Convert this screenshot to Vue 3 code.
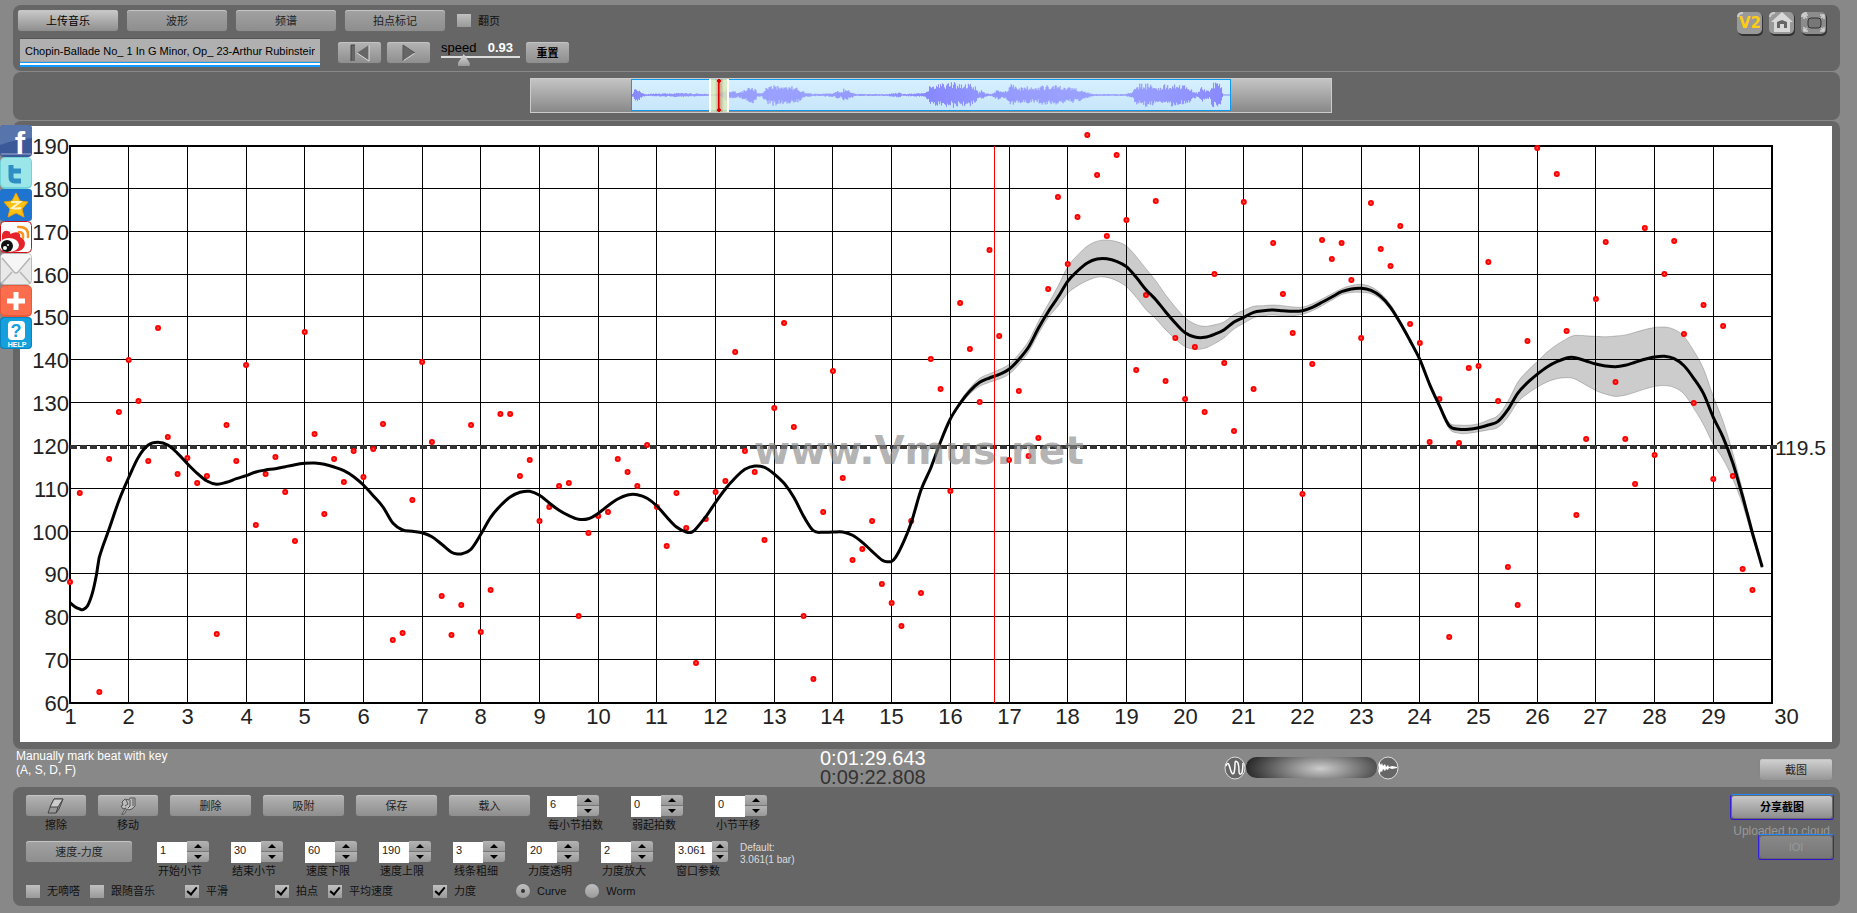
<script setup>
import { ref } from 'vue'

const tabs = ['上传音乐', '波形', '频谱', '拍点标记']
const title = ref('Chopin-Ballade No_ 1 In G Minor, Op_ 23-Arthur Rubinstein')
const speed = ref(25)
const volume = ref(50)

const editButtons = ['删除', '吸附', '保存', '载入']
const beatFields = ref([
  { id: 'beats', label: '每小节拍数', value: '6' },
  { id: 'pickup', label: '弱起拍数', value: '0' },
  { id: 'shift', label: '小节平移', value: '0' },
])
const viewFields = ref([
  { id: 'start', label: '开始小节', value: '1' },
  { id: 'end', label: '结束小节', value: '30' },
  { id: 'tempo-min', label: '速度下限', value: '60' },
  { id: 'tempo-max', label: '速度上限', value: '190' },
  { id: 'line-width', label: '线条粗细', value: '3' },
  { id: 'opacity', label: '力度透明', value: '20' },
  { id: 'zoom', label: '力度放大', value: '2' },
  { id: 'window', label: '窗口参数', value: '3.061', wide: true },
])
const checkGroups = ref([
  [{ label: '无嘀嗒', on: false }, { label: '跟随音乐', on: false }],
  [{ label: '平滑', on: true }],
  [{ label: '拍点', on: true }, { label: '平均速度', on: true }],
  [{ label: '力度', on: true }],
])
const shape = ref('Curve')

/* Chart geometry: one beat is a sixth of a bar */
const left = 70
const right = 1772
const top = 145.7
const bottom = 702.7
const bar = (right - left) / 29
const beat = bar / 6
const bars = Array.from({ length: 30 }, (_, i) => ({ n: i + 1, x: Math.floor(left + i * bar) + 0.5 }))
const levels = Array.from({ length: 14 }, (_, i) => ({
  n: 190 - i * 10,
  y: Math.floor(top + (i * (bottom - top)) / 13 - 0.2) + 0.5,
}))

const beatHeights = [
  582, 493, null, 692, 459, 412, 360, 401, 461, 328, 437, 474,
  458, 483, 476, 634, 425, 461, 365, 525, 474, 457, 492, 541,
  332, 434, 514, 459, 482, 451, 477, 449, 424, 640, 633, 500,
  362, 442, 596, 635, 605, 425, 632, 590, 414, 414, 476, 460,
  521, 507, 486, 483, 616, 533, 516, 512, 459, 472, 486, 445,
  507, 546, 493, 528, 663, 519, 492, 481, 352, 451, 472, 540,
  408, 323, 427, 616, 679, 512, 371, 478, 560, 549, 521, 584,
  603, 626, 521, 593, 359, 389, 491, 303, 349, 402, 250, 336,
  460, 391, 456, 438, 289, 197, 264, 217, 135, 175, 236, 155,
  220, 370, 295, 201, 381, 338, 399, 347, 412, 274, 363, 431,
  202, 389, null, 243, 294, 333, 494, 364, 240, 259, 243, 280,
  338, 203, 249, 266, 226, 324, 343, 442, 399, 637, 443, 368,
  366, 262, 401, 567, 605, 341, 148, null, 174, 331, 515, 439,
  299, 242, 382, 439, 484, 228, 455, 274, 241, 334, 403, 305,
  479, 326, 476, 569, 590,
]
const dots = beatHeights.map((y, k) => ({ x: left + k * beat, y })).filter((d) => d.y !== null)

/* Smoothed tempo: pairs of [beat, height] */
const curve = [
  [0, 602.7], [0.5, 606.7], [1, 609], [1.3, 609.7], [1.8, 605.7], [2.3, 592.7], [2.7, 575], [3, 557.3],
  ...[529, 500.7, 477.7, 457, 445, 442.3, 445, 453.3, 463.7, 473.3, 481, 484.3, 482.3, 478.7, 475.7, 472, 470,
    468.7, 466.7, 464.7, 463.3, 463, 464.3, 467, 470.7, 476.7, 485, 495.7, 507, 523, 530, 531.3, 532.7, 536.7,
    544.3, 552.3].map((y, i) => [i + 4, y]),
  [39.6, 554], [40.2, 553.3],
  ...[549.3, 534.3, 517.3, 505.7, 497, 492.3, 491.3, 495.3, 503, 510.3, 515.7, 519.3, 518.7, 513.3, 505.7, 499,
    495, 494.7, 498.3, 506, 517, 527, 532].map((y, i) => [i + 41, y]),
  [63.6, 532],
  ...[528.7, 516.7, 502.3, 489, 478, 469.3, 466, 467.3, 474, 483.3, 497.3, 516.3, 530.7, 532.3, 532, 532, 535.3,
    542.3, 551.3, 560].map((y, i) => [i + 64, y]),
  [83.5, 561.7], [84, 561.3], [84.4, 557.3],
  ...[546.7, 522.7, 490, 468, 441.7, 419, 403.3, 391, 382.3, 378, 374.3, 369.3, 359.5, 347, 328.3, 311.7, 297.3,
    281.3, 271, 263, 259, 258.7, 261.3, 266.7, 277.3, 289.7, 299.7, 311.7, 323, 332.7, 337, 337.3, 334.3, 329.7,
    322, 317.3, 312.3, 310.7, 310, 310.7, 311.3, 310.7, 307.3, 302.3, 297, 291.7, 289, 288.3, 290.3, 296.3, 307.3,
    323, 340.7, 359.7, 384.3, 405.7, 425.7, 429.3, 429.3, 427.7, 425, 421.3, 409.7, 393.3, 382.7, 374.3, 367,
    361.7, 358].map((y, i) => [i + 85, y]),
  [153.5, 357.3],
  ...[358, 361, 364, 366, 366.7, 365.3, 362.3, 359.3, 357, 356.3, 358.7, 365.7, 378.3, 393.7, 417.3, 437.3, 463.3,
    496.7, 533, 567].map((y, i) => [i + 154, y]),
]

/* Half height of the loudness band: [beat, above, below] */
const band = [
  [90, 0, 0], [91, 2, 2], [93, 4, 4], [96, 5, 5], [98, 6, 5], [100, 7.7, 6], [102, 14.6, 12], [104, 17, 17.7],
  [106, 18.7, 18.7], [108, 20.7, 20], [110, 21, 20], [112, 17, 18], [114, 15, 14], [115, 13, 12.3], [116, 11, 11],
  [118, 8, 8], [120, 7, 6], [122, 5, 5], [124, 5, 5], [126, 3.7, 3.7], [130, 3, 3], [132, 4, 4], [134, 3, 3],
  [137, 2, 2], [140, 2, 2], [142, 4.3, 4], [144, 4, 4], [146, 6, 6], [148, 11, 9], [150, 12.7, 13], [152, 17, 17],
  [153, 19.3, 19.7], [154, 22.7, 21.7], [156, 27.7, 26.7], [158, 30.7, 29.7], [160, 30, 30], [163, 29.3, 29.3],
  [165, 29.3, 28.3], [166, 27.5, 30], [167, 25, 31], [168, 21, 27], [169, 16, 22], [170, 10, 16], [171, 6, 8],
  [173, 1, 1],
]

function spread(k, side) {
  const i = Math.max(1, band.findIndex((b) => b[0] >= k))
  const a = band[i - 1]
  const b = band[i]
  return a[side] + ((b[side] - a[side]) * (k - a[0])) / (b[0] - a[0])
}

function smooth(points) {
  const at = (i) => points[Math.min(points.length - 1, Math.max(0, i))]
  const f = (n) => n.toFixed(1)
  return points.slice(1).map((p, i) => {
    const [p0, p1, p2, p3] = [at(i - 1), at(i), p, at(i + 2)]
    const d = (p2[0] - p1[0]) / 3
    const s1 = (p2[1] - p0[1]) / (p2[0] - p0[0])
    const s2 = p3 === p2 ? (p2[1] - p1[1]) / (p2[0] - p1[0]) : (p3[1] - p1[1]) / (p3[0] - p1[0])
    return `C${f(p1[0] + d)} ${f(p1[1] + s1 * d)} ${f(p2[0] - d)} ${f(p2[1] - s2 * d)} ${f(p2[0])} ${f(p2[1])}`
  }).join('')
}

const line = curve.map(([k, y]) => [left + k * beat, y])
const linePath = `M${line[0][0]} ${line[0][1]}${smooth(line)}`
const loud = curve.filter(([k]) => k >= 90)
const upper = loud.map(([k, y]) => [left + k * beat, y - spread(k, 1)])
const lower = loud.map(([k, y]) => [left + k * beat, y + spread(k, 2)]).reverse()
const bandPath = `M${upper[0]}${smooth(upper)}L${lower[0]}${smooth(lower)}Z`

/* Waveform envelope: [position, half height], drawn as one column per pixel */
const envelope = [
  [0, 2], [3, 7], [6, 6], [10, 2], [14, 1], [46, 2], [80, 1], [88, 1.5], [92, 4], [95, 7], [98, 3], [102, 4],
  [106, 2], [112, 5], [121, 8], [126, 2], [130, 2], [135, 8], [141, 11], [148, 8], [156, 9], [166, 7], [174, 2],
  [187, 1], [203, 2], [205, 5], [209, 2], [212, 6], [218, 4], [224, 1], [255, 1], [268, 2.5], [271, 1], [294, 2],
  [298, 8], [308, 11], [323, 12], [339, 11], [344, 8], [347, 3], [350, 5], [354, 2], [360, 1], [366, 5], [373, 3],
  [380, 11], [386, 8], [396, 8], [404, 7], [412, 9], [422, 9], [433, 8], [446, 7], [451, 5], [459, 2], [464, 1],
  [495, 1], [502, 3], [506, 11], [517, 11], [527, 8], [537, 11], [548, 10], [558, 8], [563, 4], [567, 2], [571, 8],
  [575, 6], [579, 3], [582, 12], [590, 12], [592, 3], [593, 0.5], [600, 0.5],
]
let seed = 11
const noise = () => (seed = (seed * 16807) % 2147483647) / 2147483647
const wavePath = Array.from({ length: 600 }, (_, x) => {
  const i = Math.max(1, envelope.findIndex((e) => e[0] >= x))
  const [a, b] = [envelope[i - 1], envelope[i]]
  const h = a[1] + ((b[1] - a[1]) * (x - a[0])) / (b[0] - a[0])
  const up = Math.max(0.5, h * (0.5 + 0.6 * noise()))
  const down = Math.max(0.5, h * (0.5 + 0.6 * noise()))
  return `M${x + 0.5} ${(15 - up).toFixed(1)}V${(15 + down).toFixed(1)}`
}).join('')
</script>

<template>
  <div class="page">
    <header class="panel toolbar">
      <div class="tools">
        <div class="tabs">
          <button v-for="(t, i) in tabs" :key="t" type="button" class="btn tab" :class="{ lit: i === 0 }">{{ t }}</button>
          <label class="check flip"><input type="checkbox" />翻页</label>
        </div>
        <div class="player">
          <input v-model="title" class="title" type="text" aria-label="Title" />
          <button type="button" class="btn media" aria-label="Rewind">
            <svg width="24" height="18" viewBox="0 0 24 18">
              <path d="M3 1h4v16H3z" fill="#666" /><path d="M3 17V1h4" fill="none" stroke="#444" />
              <path d="M21 1L9 9l12 8z" fill="#666" /><path d="M21 1v16L9 9" fill="none" stroke="#ddd" />
            </svg>
          </button>
          <button type="button" class="btn media" aria-label="Play">
            <svg width="24" height="18" viewBox="0 0 24 18">
              <path d="M6 1l12 8-12 8z" fill="#666" /><path d="M6 17l12-8" fill="none" stroke="#ddd" />
              <path d="M6 17V1l12 8" fill="none" stroke="#555" />
            </svg>
          </button>
          <div class="speed">
            <div class="speed-text"><label for="speed">speed</label><output for="speed">0.93</output></div>
            <input id="speed" v-model="speed" type="range" min="0" max="100" />
          </div>
          <button type="button" class="btn reset">重置</button>
        </div>
      </div>
      <nav class="shortcuts">
        <a href="#" aria-label="Version 2">
          <svg width="28" height="26" viewBox="0 0 28 26">
            <rect x="2" y="2" width="25" height="23" rx="5" fill="#333" /><rect x="1" y="1" width="25" height="22" rx="5" fill="#999" />
            <path d="M2 6q0-4 5-4" fill="none" stroke="#ccc" stroke-width="2" />
            <text x="14" y="17" class="v2">V2</text>
          </svg>
        </a>
        <a href="#" aria-label="Home">
          <svg width="28" height="26" viewBox="0 0 28 26">
            <rect x="2" y="2" width="25" height="23" rx="5" fill="#333" /><rect x="1" y="1" width="25" height="22" rx="5" fill="#999" />
            <path d="M2 6q0-4 5-4" fill="none" stroke="#ccc" stroke-width="2" />
            <path d="M14 1L3 11h3v10h16V11h3z" fill="#d8d8d8" />
            <path d="M9 11l5-2 5 2v6h-3v-4h-4v4H9z" fill="#666" />
          </svg>
        </a>
        <a href="#" aria-label="Full screen">
          <svg width="28" height="26" viewBox="0 0 28 26">
            <rect x="2" y="2" width="25" height="23" rx="5" fill="#333" /><rect x="1" y="1" width="25" height="22" rx="5" fill="#8c8c8c" />
            <path d="M2 6q0-4 5-4" fill="none" stroke="#ccc" stroke-width="2" />
            <rect x="8" y="7" width="13" height="10" rx="3" fill="#777" stroke="#333" />
            <path d="M4 8V4h4M4 4l3 3M20 4h4v4M24 4l-3 3M4 16v4h4M4 20l3-3M20 20h4v-4M24 20l-3-3" fill="none" stroke="#d0d0d0" stroke-width="1.5" />
          </svg>
        </a>
      </nav>
    </header>

    <section class="panel overview">
      <div class="track">
        <div class="clip">
          <svg class="wave" viewBox="0 0 600 30" preserveAspectRatio="none">
            <path :d="wavePath" stroke="#8888ff" fill="none" />
          </svg>
          <div class="window"><i></i></div>
        </div>
      </div>
    </section>

    <main class="panel stage">
      <svg class="chart" viewBox="20 126 1812 616" role="img" aria-label="Tempo by bar">
        <g class="grid">
          <line v-for="b in bars.slice(1, 29)" :key="'x' + b.n" :x1="b.x" :x2="b.x" :y1="top" :y2="bottom" />
          <line v-for="l in levels.slice(1, 13)" :key="'y' + l.n" :x1="left" :x2="right" :y1="l.y" :y2="l.y" />
        </g>
        <g class="ylabels"><text v-for="l in levels" :key="l.n" x="69" :y="l.y + 8">{{ l.n }}</text></g>
        <g class="xlabels">
          <text v-for="b in bars" :key="b.n" :x="b.n === 30 ? b.x + 14 : b.x" y="724">{{ b.n }}</text>
        </g>
        <rect class="frame" :x="left" y="146" :width="right - left" height="557" />
        <line class="average" x1="70" x2="1777" y1="447" y2="447" />
        <text class="average-label" x="1775" y="455">119.5</text>
        <path class="band" :d="bandPath" />
        <g class="beats"><circle v-for="d in dots" :key="d.x" :cx="d.x" :cy="d.y" r="2" /></g>
        <path class="curve" :d="linePath" />
        <line class="cursor" x1="994.5" x2="994.5" y1="146" y2="703" />
        <text class="watermark" x="754" y="464">www.Vmus.net</text>
      </svg>
    </main>

    <section class="status">
      <p class="hint">Manually mark beat with key<br />(A, S, D, F)</p>
      <div class="clock"><div>0:01:29.643</div><div class="total">0:09:22.808</div></div>
      <div class="volume">
        <svg width="22" height="24" viewBox="0 0 22 24">
          <ellipse cx="11" cy="12" rx="10" ry="11" fill="#666" stroke="#ddd" />
          <path d="M2 10q2-6 4 2t4 5q1-4 1-9t3-1q1 3 1 8t3 2q1-4 1-10" fill="none" stroke="#fff" stroke-width="1.5" />
        </svg>
        <input v-model="volume" type="range" aria-label="Balance" />
        <svg width="22" height="24" viewBox="0 0 22 24">
          <ellipse cx="11" cy="12" rx="10" ry="11" fill="#666" stroke="#ddd" />
          <path d="M2 6l2 3 1-2 1 3 2-2 1 3 2-2 1 2 3-1 5 1v1l-5 1-3-1-1 2-2-1-1 2-2-2-1 3-1-1-2 4z" fill="#fff" />
        </svg>
      </div>
      <button type="button" class="btn lit shot">截图</button>
    </section>

    <footer class="panel controls">
      <div class="settings">
        <div class="row">
          <div class="captioned">
            <button type="button" class="btn tool" aria-labelledby="erase-label">
              <svg width="20" height="18" viewBox="0 0 20 18">
                <path d="M8 2h9l-4 10-3 4H2l3-8z" fill="#999" stroke="#444" />
                <path d="M8 2h9l-5 8H4z" fill="#ccc" stroke="#444" /><path d="M12 10l-2 6" stroke="#444" />
              </svg>
            </button>
            <span id="erase-label">擦除</span>
          </div>
          <div class="captioned">
            <button type="button" class="btn tool" aria-labelledby="move-label">
              <svg width="20" height="18" viewBox="0 0 20 18">
                <path d="M4 17l4-6-3 1-2-3 2-1-1-3 3-3 4 1 1-2h5v8l-3 3-3 1-2-1-2 4-3 2z" fill="#bbb" stroke="#555" />
                <path d="M8 3l2 4-3 2M12 3v6l-2 2M15 2v7" fill="none" stroke="#555" />
              </svg>
            </button>
            <span id="move-label">移动</span>
          </div>
          <button v-for="b in editButtons" :key="b" type="button" class="btn edit">{{ b }}</button>
          <div class="fields beat-fields">
            <div v-for="f in beatFields" :key="f.id" class="field">
              <div class="spin">
                <input :id="f.id" v-model="f.value" type="text" />
                <div class="steps">
                  <button type="button" :aria-label="f.label + ' +'"><i class="up"></i></button>
                  <button type="button" :aria-label="f.label + ' -'"><i class="down"></i></button>
                </div>
              </div>
              <label :for="f.id">{{ f.label }}</label>
            </div>
          </div>
        </div>

        <div class="row second">
          <button type="button" class="btn mode">速度-力度</button>
          <div class="fields view-fields">
            <div v-for="f in viewFields" :key="f.id" class="field" :class="{ wide: f.wide }">
              <div class="spin">
                <input :id="f.id" v-model="f.value" type="text" />
                <div class="steps">
                  <button type="button" :aria-label="f.label + ' +'"><i class="up"></i></button>
                  <button type="button" :aria-label="f.label + ' -'"><i class="down"></i></button>
                </div>
              </div>
              <label :for="f.id">{{ f.label }}</label>
            </div>
          </div>
          <p class="default">Default:<br />3.061(1 bar)</p>
        </div>

        <div class="options">
          <div v-for="(g, i) in checkGroups" :key="i" class="group">
            <label v-for="c in g" :key="c.label" class="check"><input v-model="c.on" type="checkbox" />{{ c.label }}</label>
          </div>
          <div class="group radios">
            <label v-for="s in ['Curve', 'Worm']" :key="s" class="check"><input v-model="shape" type="radio" name="shape" :value="s" />{{ s }}</label>
          </div>
        </div>
      </div>

      <div class="upload">
        <div class="ring"><button type="button" class="btn share-btn">分享截图</button></div>
        <p>Uploaded to cloud</p>
        <div class="ring small"><button type="button" class="btn faded" disabled>IOI</button></div>
      </div>
    </footer>

    <nav class="social">
      <a href="#" aria-label="Facebook">
        <svg viewBox="0 0 32 32">
          <rect width="32" height="32" rx="4" fill="#3b5998" /><path d="M0 4q0-4 4-4h24q4 0 4 4v9Q16 14 0 20z" fill="#5874ad" />
          <rect x="1" y="28" width="30" height="2" fill="#6d84b4" /><text x="20" y="29" class="fb">f</text>
        </svg>
      </a>
      <a href="#" aria-label="Twitter">
        <svg viewBox="0 0 32 32">
          <rect width="32" height="32" rx="5" fill="#6fd3d8" /><rect x="1" y="1" width="30" height="29" rx="4" fill="#9be6e8" />
          <path d="M11 8v12q0 4 4 4h6M11 14h10" fill="none" stroke="#2f8fc4" stroke-width="5" stroke-linejoin="round" />
        </svg>
      </a>
      <a href="#" aria-label="Qzone">
        <svg viewBox="0 0 32 32">
          <rect width="32" height="32" rx="3" fill="#1f74d0" />
          <path d="M16 4l4 8 8 1-6 7 2 8-8-4-8 4 2-8-6-7 8-1z" fill="#fdc114" stroke="#f0a000" />
          <path d="M11 13h9l-8 6q5 1 9 0" fill="none" stroke="#fff6c8" stroke-width="2" />
        </svg>
      </a>
      <a href="#" aria-label="Weibo">
        <svg viewBox="0 0 32 32">
          <rect x="0.5" y="0.5" width="31" height="31" rx="4" fill="#fff" stroke="#c8141a" />
          <path d="M2 14q1-5 6-4 3 1 2 3 6-3 9-1 2 2 1 4 5 2 5 7 0 7-12 8H2z" fill="#e6232b" />
          <ellipse cx="9" cy="24" rx="10" ry="7" fill="#fff" /><circle cx="7" cy="25" r="6" fill="#111" />
          <circle cx="5" cy="27" r="2" fill="#fff" /><circle cx="8" cy="24" r="1" fill="#fff" />
          <path d="M19 11q5 0 4 6M18 6q11-1 10 10" fill="none" stroke="#f7941d" stroke-width="2.5" stroke-linecap="round" />
        </svg>
      </a>
      <a href="#" aria-label="Mail">
        <svg viewBox="0 0 32 32">
          <rect x="0.5" y="0.5" width="31" height="31" rx="4" fill="#e9e9e9" stroke="#bbb" />
          <path d="M1 4l13 15q2 2 4 0L31 4V3q-1-2-3-2H4Q2 1 1 3z" fill="#f6f6f6" />
          <path d="M2 5l12 14q2 2 4 0L30 5M2 30l10-11M30 30L20 19" fill="none" stroke="#b5b5b5" stroke-width="1.5" />
        </svg>
      </a>
      <a href="#" aria-label="More">
        <svg viewBox="0 0 32 32">
          <rect width="32" height="32" rx="5" fill="#e8583a" /><rect x="1" y="1" width="30" height="29" rx="4" fill="#fb6d4c" />
          <path d="M16 7v18M7 16h18" stroke="#fff" stroke-width="5" />
        </svg>
      </a>
      <a href="#" aria-label="Help">
        <svg viewBox="0 0 32 32">
          <rect width="32" height="32" rx="4" fill="#0783c0" /><rect x="1" y="1" width="30" height="30" rx="4" fill="#14a0dc" />
          <rect x="8" y="4" width="17" height="19" rx="4" fill="#fff" />
          <text x="16" y="20" class="q">?</text><text x="17" y="30" class="help">HELP</text>
        </svg>
      </a>
    </nav>
  </div>
</template>

<style>
body {
  margin: 0;
  background: #888;
}
</style>

<style scoped>
.page {
  position: relative;
  box-sizing: border-box;
  min-height: 100vh;
  padding: 5px 17px 7px 13px;
  background: #888;
  font: 11px/14px "Liberation Sans", "Noto Sans CJK SC", sans-serif;
  color: #111;
}
p, input, button { margin: 0; }
input, button { font: inherit; }
.panel { background: #666; border-radius: 8px; }
.btn {
  box-sizing: border-box;
  height: 21px;
  padding: 0;
  border: 0;
  border-radius: 3px;
  background: linear-gradient(#b4b4b4, #8e8e8e);
  box-shadow: inset 0 1px #c4c4c4, 0 0 1px #777;
  color: #222;
  line-height: 20px;
  white-space: nowrap;
}
.btn svg { display: block; margin: auto; }
.lit { background: linear-gradient(#d2d2d2, #969696); color: #000; }

.toolbar {
  display: flex;
  justify-content: space-between;
  padding: 5px 12px 4px 5px;
}
.tabs { display: flex; gap: 9px; }
.tab { width: 100px; background: linear-gradient(#a2a2a2, #8e8e8e); }
.tab.lit { background: linear-gradient(#cacaca, #8e8e8e); }
.flip { margin-left: 3px; }
.player {
  display: flex;
  align-items: center;
  margin-top: 7px;
  padding-left: 2px;
}
.title {
  box-sizing: border-box;
  width: 300px;
  height: 29px;
  padding: 0 5px 4px;
  border: 1px solid #555;
  border-width: 1px 0 0;
  background: linear-gradient(#b0b0b0 22px, #999 23px, #19f 23px, #19f 24px, #fff 24px, #fff 26px, #19f 26px);
  color: #000;
}
.media { width: 43px; margin-left: 18px; }
.media + .media { margin-left: 6px; }
.speed { width: 79px; margin-left: 11px; }
.speed-text {
  display: flex;
  justify-content: space-between;
  padding-right: 7px;
  font-size: 13px;
  line-height: 15px;
  color: #000;
}
.speed output { color: #fff; font-weight: bold; }
.speed input {
  appearance: none;
  display: block;
  width: 79px;
  height: 11px;
  background: linear-gradient(transparent 1px, #ddd 1px, #ddd 3px, transparent 3px);
}
.speed input::-webkit-slider-thumb {
  appearance: none;
  width: 12px;
  height: 12px;
  background: linear-gradient(#ddd, #999);
  clip-path: polygon(50% 0, 100% 75%, 100% 100%, 0 100%, 0 75%);
}
.reset { width: 43px; margin-left: 6px; color: #000; font-weight: bold; }
.shortcuts { display: flex; gap: 4px; padding-top: 1px; }
.shortcuts svg { display: block; }
.v2 { font: bold 15px "DejaVu Sans", sans-serif; fill: #ffcc11; text-anchor: middle; }

.overview { margin-top: 1px; padding: 6px 0 7px 8px; }
.track {
  box-sizing: border-box;
  display: flex;
  justify-content: center;
  width: 802px;
  height: 35px;
  margin: 0 auto;
  border: 1px solid #ccc;
  background: linear-gradient(#c4c4c4, #888);
}
.clip {
  position: relative;
  box-sizing: border-box;
  width: 600px;
  height: 32px;
  border: 1px solid #19e;
  background: linear-gradient(#d6f0ff, #c8e6fb);
}
.wave { display: block; width: 100%; height: 30px; }
.window {
  position: absolute;
  left: 13%;
  top: -1px;
  box-sizing: border-box;
  width: 20px;
  height: 33px;
  border: 1px solid #fff;
  border-width: 0 2px;
  background: linear-gradient(90deg, #dcecb8cc, #dcecb8cc 4px, #c08060cc 8px, #dcecb8cc 13px);
}
.window i {
  display: block;
  width: 4px;
  height: 33px;
  margin: 0 auto;
  background:
    radial-gradient(circle at 2px 2px, #d00 2px, transparent 2px),
    radial-gradient(circle at 2px 31px, #d00 2px, transparent 2px),
    linear-gradient(90deg, transparent 1px, #d00 1px, #d00 2px, transparent 3px);
}

.stage { margin-top: 1px; padding: 5px 8px 7px 7px; }
.chart {
  display: block;
  width: 100%;
  background: #fff;
  font: 22px "Liberation Sans", sans-serif;
  fill: #222;
}
.grid line { stroke: #000; stroke-width: 1; }
.frame { fill: none; stroke: #000; stroke-width: 2; }
.ylabels text { text-anchor: end; }
.xlabels text { text-anchor: middle; }
.average { stroke: #333; stroke-width: 4; stroke-dasharray: 7 3; }
.average-label { font-size: 21px; }
.band { fill: rgba(0, 0, 0, 0.2); stroke: rgba(0, 0, 0, 0.2); }
.curve { fill: none; stroke: #000; stroke-width: 3; }
.beats circle { fill: #f55; stroke: #f00; stroke-width: 2; }
.cursor { stroke: #f00; stroke-width: 1; }
.watermark { font: bold 39px "DejaVu Sans", sans-serif; fill: #888; fill-opacity: 0.65; }

.status {
  display: grid;
  grid-template-columns: 807px 1fr 175px 441px;
  height: 38px;
}
.hint { padding-left: 3px; font-size: 12px; color: #fff; }
.clock { color: #fff; font-size: 20px; line-height: 19px; }
.total { color: #333; }
.volume { display: flex; align-items: center; height: 37px; }
.volume input {
  appearance: none;
  width: 131px;
  height: 21px;
  border-radius: 11px;
  background: radial-gradient(ellipse 75px 26px at 57% 55%, #ccc, #2a2a2a);
}
.volume input::-webkit-slider-thumb { appearance: none; width: 1px; height: 1px; }
.shot { width: 72px; justify-self: end; margin: 10px 8px 0 0; color: #222; }

.controls { display: flex; justify-content: space-between; padding: 8px 6px 8px 13px; }
.row { display: flex; gap: 12px; height: 46px; }
.second { height: 40px; }
.captioned { display: flex; flex-direction: column; align-items: center; }
.captioned span { margin-top: 2px; }
.tool { width: 60px; }
.edit { width: 81px; }
.mode { width: 106px; background: linear-gradient(#a2a2a2, #8e8e8e); }
.fields { display: flex; }
.beat-fields { gap: 31px; margin-left: 5px; }
.view-fields { gap: 21px; margin-left: 13px; }
.field { width: 53px; }
.field label { display: block; margin-top: 1px; padding-left: 1px; white-space: nowrap; }
.spin { display: flex; height: 22px; }
.spin input {
  box-sizing: border-box;
  width: 30px;
  height: 21px;
  margin-top: 1px;
  padding: 0 0 6px 3px;
  border: 0;
  background: #fff;
  color: #222;
}
.wide .spin input { width: 37px; }
.steps {
  display: flex;
  flex-direction: column;
  gap: 1px;
  width: 22px;
  height: 21px;
  border-radius: 0 3px 3px 0;
  overflow: hidden;
  background: #777;
}
.steps button {
  display: flex;
  flex: 1;
  align-items: center;
  justify-content: center;
  padding: 0;
  border: 0;
  background: linear-gradient(#b4b4b4, #999);
}
.steps i { border: 4px solid transparent; border-width: 0 4px; }
.steps .up { border-bottom: 4px solid #000; }
.steps .down { border-top: 4px solid #000; }
.default { padding-top: 1px; font-size: 10px; line-height: 12px; color: #ddd; }

.options {
  display: grid;
  grid-template-columns: 159px 90px 158px 83px auto;
  padding-top: 3px;
}
.group { display: flex; gap: 10px; }
.radios { gap: 19px; }
.check { display: flex; align-items: center; gap: 7px; white-space: nowrap; }
.check input {
  appearance: none;
  position: relative;
  width: 14px;
  height: 13px;
  background: linear-gradient(#c0c0c0, #999);
}
.check input[type="radio"] { height: 14px; border-radius: 50%; }
.check input[type="checkbox"]:checked::after {
  content: "";
  position: absolute;
  left: 4px;
  top: 0;
  width: 4px;
  height: 8px;
  border: solid #000;
  border-width: 0 2px 2px 0;
  transform: rotate(40deg);
}
.check input[type="radio"]:checked::after {
  content: "";
  position: absolute;
  inset: 5px;
  border-radius: 50%;
  background: #333;
}

.upload { display: flex; flex-direction: column; align-items: flex-end; margin-top: -1px; }
.ring {
  padding: 1px;
  border: 1px solid;
  border-color: #28f #32d #31c;
  border-radius: 3px;
}
.share-btn { display: block; width: 100px; height: 22px; color: #000; font-weight: bold; background: linear-gradient(#c8c8c8, #8e8e8e); }
.upload p { padding-right: 4px; font-size: 12px; line-height: 14px; margin-top: 4px; color: #999; }
.small { margin-top: -4px; }
.faded { display: block; width: 72px; height: 22px; background: linear-gradient(#888, #777); box-shadow: none; color: #999; }

.social { position: absolute; left: 0; top: 125px; width: 32px; }
.social a, .social svg { display: block; width: 32px; height: 32px; }
.fb { font: bold 31px "Liberation Sans", sans-serif; fill: #fff; text-anchor: middle; }
.q { font: bold 18px "Liberation Sans", sans-serif; fill: #14a0dc; text-anchor: middle; }
.help { font: bold 7px "Liberation Sans", sans-serif; fill: #fff; text-anchor: middle; }
</style>
